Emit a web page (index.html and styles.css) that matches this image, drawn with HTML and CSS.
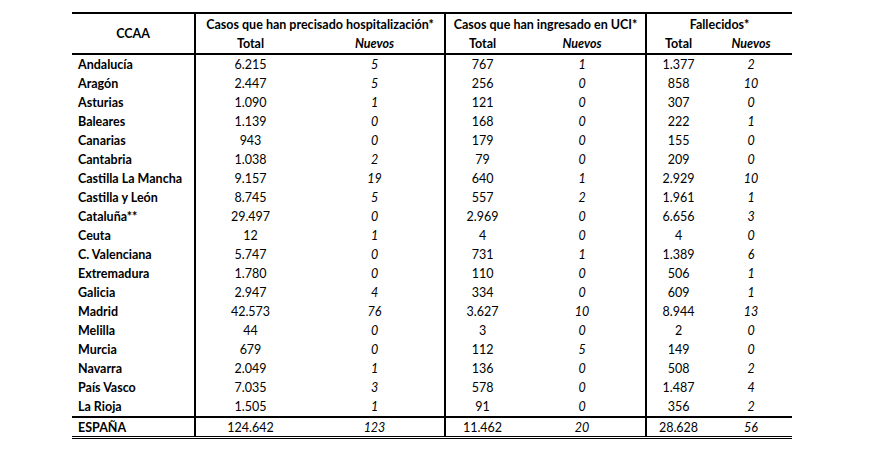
FILE: index.html
```html
<!DOCTYPE html>
<html lang="es">
<head>
<meta charset="utf-8">
<link rel="stylesheet" href="styles.css">
</head>
<body>
<table class="t">
<colgroup>
<col class="c-name"><col class="c-ht"><col class="c-hn"><col class="c-ut"><col class="c-un"><col class="c-ft"><col class="c-fn">
</colgroup>
<thead>
<tr class="h1">
<th rowspan="2" class="ccaa">CCAA</th>
<th colspan="2" class="grp">Casos que han precisado hospitalización*</th>
<th colspan="2" class="grp">Casos que han ingresado en UCI*</th>
<th colspan="2" class="grp">Fallecidos*</th>
</tr>
<tr class="h2">
<th class="sep">Total</th><th class="nv">Nuevos</th>
<th class="sep">Total</th><th class="nv">Nuevos</th>
<th class="sep">Total</th><th class="nv">Nuevos</th>
</tr>
</thead>
<tbody>
<tr><td class="n">Andalucía</td><td class="sep">6.215</td><td class="i">5</td><td class="sep">767</td><td class="i">1</td><td class="sep">1.377</td><td class="i">2</td></tr>
<tr><td class="n">Aragón</td><td class="sep">2.447</td><td class="i">5</td><td class="sep">256</td><td class="i">0</td><td class="sep">858</td><td class="i">10</td></tr>
<tr><td class="n">Asturias</td><td class="sep">1.090</td><td class="i">1</td><td class="sep">121</td><td class="i">0</td><td class="sep">307</td><td class="i">0</td></tr>
<tr><td class="n">Baleares</td><td class="sep">1.139</td><td class="i">0</td><td class="sep">168</td><td class="i">0</td><td class="sep">222</td><td class="i">1</td></tr>
<tr><td class="n">Canarias</td><td class="sep">943</td><td class="i">0</td><td class="sep">179</td><td class="i">0</td><td class="sep">155</td><td class="i">0</td></tr>
<tr><td class="n">Cantabria</td><td class="sep">1.038</td><td class="i">2</td><td class="sep">79</td><td class="i">0</td><td class="sep">209</td><td class="i">0</td></tr>
<tr><td class="n">Castilla La Mancha</td><td class="sep">9.157</td><td class="i">19</td><td class="sep">640</td><td class="i">1</td><td class="sep">2.929</td><td class="i">10</td></tr>
<tr><td class="n">Castilla y León</td><td class="sep">8.745</td><td class="i">5</td><td class="sep">557</td><td class="i">2</td><td class="sep">1.961</td><td class="i">1</td></tr>
<tr><td class="n">Cataluña**</td><td class="sep">29.497</td><td class="i">0</td><td class="sep">2.969</td><td class="i">0</td><td class="sep">6.656</td><td class="i">3</td></tr>
<tr><td class="n">Ceuta</td><td class="sep">12</td><td class="i">1</td><td class="sep">4</td><td class="i">0</td><td class="sep">4</td><td class="i">0</td></tr>
<tr><td class="n">C. Valenciana</td><td class="sep">5.747</td><td class="i">0</td><td class="sep">731</td><td class="i">1</td><td class="sep">1.389</td><td class="i">6</td></tr>
<tr><td class="n">Extremadura</td><td class="sep">1.780</td><td class="i">0</td><td class="sep">110</td><td class="i">0</td><td class="sep">506</td><td class="i">1</td></tr>
<tr><td class="n">Galicia</td><td class="sep">2.947</td><td class="i">4</td><td class="sep">334</td><td class="i">0</td><td class="sep">609</td><td class="i">1</td></tr>
<tr><td class="n">Madrid</td><td class="sep">42.573</td><td class="i">76</td><td class="sep">3.627</td><td class="i">10</td><td class="sep">8.944</td><td class="i">13</td></tr>
<tr><td class="n">Melilla</td><td class="sep">44</td><td class="i">0</td><td class="sep">3</td><td class="i">0</td><td class="sep">2</td><td class="i">0</td></tr>
<tr><td class="n">Murcia</td><td class="sep">679</td><td class="i">0</td><td class="sep">112</td><td class="i">5</td><td class="sep">149</td><td class="i">0</td></tr>
<tr><td class="n">Navarra</td><td class="sep">2.049</td><td class="i">1</td><td class="sep">136</td><td class="i">0</td><td class="sep">508</td><td class="i">2</td></tr>
<tr><td class="n">País Vasco</td><td class="sep">7.035</td><td class="i">3</td><td class="sep">578</td><td class="i">0</td><td class="sep">1.487</td><td class="i">4</td></tr>
<tr><td class="n">La Rioja</td><td class="sep">1.505</td><td class="i">1</td><td class="sep">91</td><td class="i">0</td><td class="sep">356</td><td class="i">2</td></tr>
</tbody>
<tfoot>
<tr><td class="n">ESPAÑA</td><td class="sep">124.642</td><td class="i">123</td><td class="sep">11.462</td><td class="i">20</td><td class="sep">28.628</td><td class="i">56</td></tr>
</tfoot>
</table>
</body>
</html>
```

FILE: styles.css
```css
html, body {
  margin: 0;
  padding: 0;
  background: #fff;
}

body {
  padding: 12px 0 0 72px;
  font-family: Lato, "Open Sans", sans-serif;
  color: #000;
}

.t {
  border-collapse: collapse;
  table-layout: fixed;
  width: 720px;
  font-size: 12.5px;
}

.c-name { width: 123px; }
.c-ht { width: 110px; }
.c-hn { width: 140px; }
.c-ut { width: 74px; }
.c-un { width: 127px; }
.c-ft { width: 64px; }
.c-fn { width: 82px; }

.t th, .t td {
  padding: 0;
  text-align: center;
  white-space: nowrap;
}

.t thead tr.h1 th {
  border-top: 2px solid #000;
  height: 20px;
  font-weight: 700;
}

.t thead tr.h2 th {
  height: 19px;
  border-bottom: 2px solid #000;
  font-weight: 700;
}

.t th.grp {
  border-left: 2px solid #000;
}

.t th.ccaa {
  border-bottom: 2px solid #000;
}

.t .sep {
  border-left: 2px solid #000;
}

.t .nv, .t .i {
  font-style: italic;
}

.t .i {
  font-weight: 400;
}

.t tbody td {
  height: 19px;
}

.t td.n {
  text-align: left;
  padding-left: 6px;
  font-weight: 700;
}

.t tfoot td {
  height: 18px;
  border-top: 2px solid #000;
  border-bottom: 3px double #000;
}
```
